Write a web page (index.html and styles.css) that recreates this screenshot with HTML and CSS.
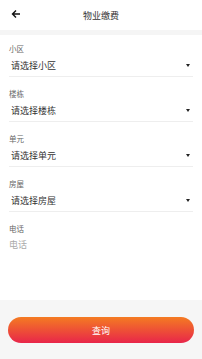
FILE: index.html
```html
<!DOCTYPE html>
<html>
<head>
<meta charset="utf-8">
<link rel="stylesheet" href="styles.css">
</head>
<body>
<div class="page">
  <div class="header">
    <svg class="back" width="10" height="10" viewBox="0 0 10 10"><path d="M9 5H1.5M5 1.5L1.5 5 5 8.5" fill="none" stroke="#111" stroke-width="1.4"/></svg>
    <div class="title">物业缴费</div>
  </div>
  <div class="sep"></div>
  <div class="form">
    <div class="field">
      <div class="label">小区</div>
      <div class="select"><span>请选择小区</span><span class="tri"></span></div>
    </div>
    <div class="field">
      <div class="label">楼栋</div>
      <div class="select"><span>请选择楼栋</span><span class="tri"></span></div>
    </div>
    <div class="field">
      <div class="label">单元</div>
      <div class="select"><span>请选择单元</span><span class="tri"></span></div>
    </div>
    <div class="field">
      <div class="label">房屋</div>
      <div class="select"><span>请选择房屋</span><span class="tri"></span></div>
    </div>
    <div class="field">
      <div class="label">电话</div>
      <div class="input">电话</div>
    </div>
  </div>
  <div class="footer">
    <div class="btn">查询</div>
  </div>
</div>
</body>
</html>
```
FILE: styles.css
```css
* { box-sizing: border-box; }
html, body { margin: 0; padding: 0; }
body { font-family: "Noto Sans CJK SC", "Noto Sans", sans-serif; background: #fff; }
.page { width: 202px; height: 359px; display: flex; flex-direction: column; }
.header { height: 30px; position: relative; display: flex; align-items: center; justify-content: center; }
.back { position: absolute; left: 11px; top: 9px; }
.title { font-size: 9px; color: #333; }
.sep { height: 5px; background: #f5f5f5; }
.form { flex: 1; padding: 9px 9px 0; display: flex; flex-direction: column; gap: 12px; }
.label { font-size: 7.5px; color: #666; line-height: 10px; }
.select { display: flex; justify-content: space-between; align-items: center; height: 23px; border-bottom: 1px solid #eee; padding: 0 3px 0 2px; font-size: 9px; color: #333; }
.tri { width: 0; height: 0; border-left: 2px solid transparent; border-right: 2px solid transparent; border-top: 3px solid #222; }
.input { font-size: 9px; color: #aaa; height: 22px; line-height: 22px; }
.footer { height: 59px; background: #f6f6f6; padding: 17px 8px 0; }
.btn { height: 26px; border-radius: 13px; background: linear-gradient(#f47b22, #e8264a); color: #fff; font-size: 9px; display: flex; align-items: center; justify-content: center; }
```
